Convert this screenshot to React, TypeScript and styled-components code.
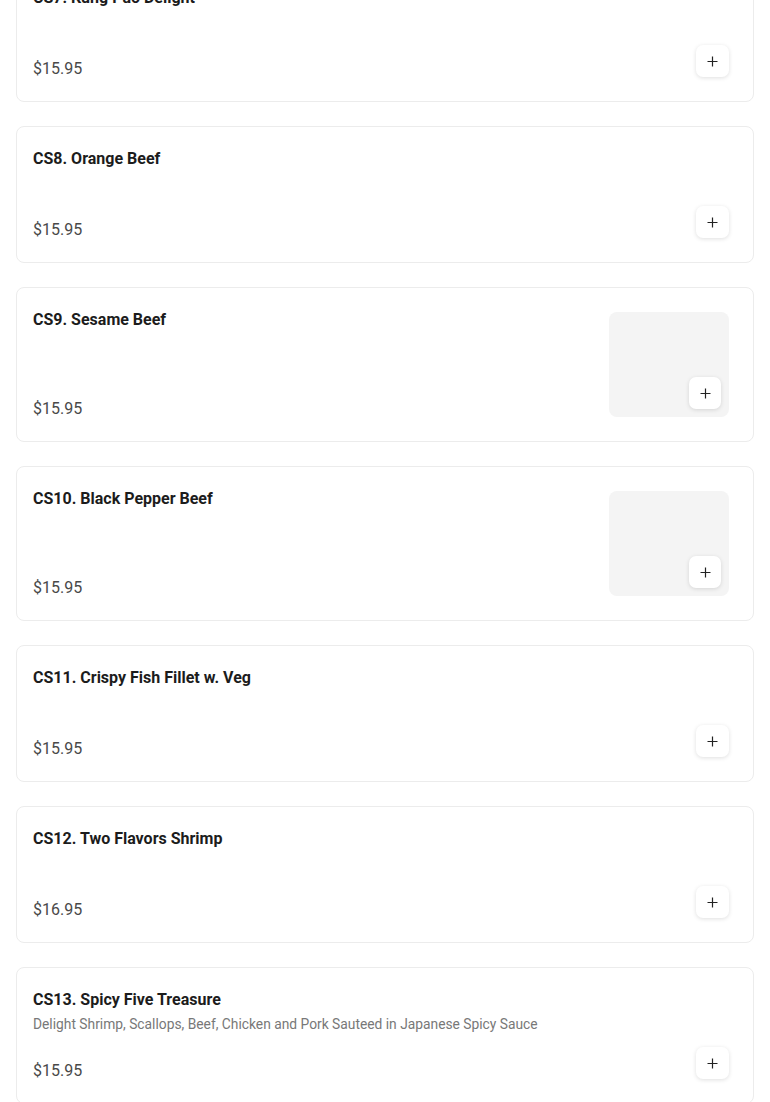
import React from "react";
import styled, { createGlobalStyle } from "styled-components";

const GlobalStyle = createGlobalStyle`
  html, body { margin: 0; padding: 0; background: #ffffff; }
  body { font-family: Roboto, "Noto Sans", Arial, sans-serif; -webkit-font-smoothing: antialiased; }
  * { box-sizing: border-box; }
`;

type Item = { name: string; price: string; desc?: string; image?: boolean };

const items: Item[] = [
  { name: "CS7. Kung Pao Delight", price: "$15.95" },
  { name: "CS8. Orange Beef", price: "$15.95" },
  { name: "CS9. Sesame Beef", price: "$15.95", image: true },
  { name: "CS10. Black Pepper Beef", price: "$15.95", image: true },
  { name: "CS11. Crispy Fish Fillet w. Veg", price: "$15.95" },
  { name: "CS12. Two Flavors Shrimp", price: "$16.95" },
  {
    name: "CS13. Spicy Five Treasure",
    price: "$15.95",
    desc: "Delight Shrimp, Scallops, Beef, Chicken and Pork Sauteed in Japanese Spicy Sauce",
  },
];

const Page = styled.div`
  padding: 0 16px;
  margin-top: -35px;
  display: flex;
  flex-direction: column;
  gap: 24px;
`;

const Card = styled.div`
  display: flex;
  gap: 16px;
  border: 1px solid #ececec;
  border-radius: 8px;
  padding: 20px 24px 20px 16px;
  background: #fff;
`;

const Info = styled.div`
  flex: 1;
  display: flex;
  flex-direction: column;
  min-height: 95px;
`;

const Title = styled.div`
  font-size: 16px;
  line-height: 24px;
  font-weight: 700;
  color: #1c1c1c;
`;

const Desc = styled.div`
  margin-top: 2px;
  font-size: 13.8px;
  line-height: 20px;
  color: #787878;
`;

const Price = styled.div`
  margin-top: auto;
  font-size: 16px;
  line-height: 24px;
  color: #494949;
`;

const Side = styled.div`
  display: flex;
  align-items: flex-end;
`;

const Thumb = styled.div`
  position: relative;
  width: 120px;
  height: 105px;
  margin: 4px 0 4px;
  border-radius: 8px;
  background: #f4f4f4;
`;

const AddButton = styled.button<{ $overlay?: boolean }>`
  width: 33px;
  height: 32px;
  padding: 0;
  border: none;
  border-radius: 7px;
  background: #ffffff;
  box-shadow: 0 1px 4px rgba(0, 0, 0, 0.13);
  display: flex;
  align-items: center;
  justify-content: center;
  cursor: pointer;
  ${(p) =>
    p.$overlay
      ? `position: absolute; right: 8px; bottom: 8px; width: 32px;`
      : `margin-bottom: 4px;`}
`;

const PlusIcon = () => (
  <svg width="11" height="11" viewBox="0 0 11 11" fill="none">
    <path d="M5.5 0.5v10M0.5 5.5h10" stroke="#222" strokeWidth="1.2" />
  </svg>
);

export default function App() {
  return (
    <>
      <GlobalStyle />
      <Page>
        {items.map((it) => (
          <Card key={it.name}>
            <Info>
              <Title>{it.name}</Title>
              {it.desc && <Desc>{it.desc}</Desc>}
              <Price>{it.price}</Price>
            </Info>
            <Side>
              {it.image ? (
                <Thumb>
                  <AddButton $overlay aria-label="Add">
                    <PlusIcon />
                  </AddButton>
                </Thumb>
              ) : (
                <AddButton aria-label="Add">
                  <PlusIcon />
                </AddButton>
              )}
            </Side>
          </Card>
        ))}
      </Page>
    </>
  );
}
